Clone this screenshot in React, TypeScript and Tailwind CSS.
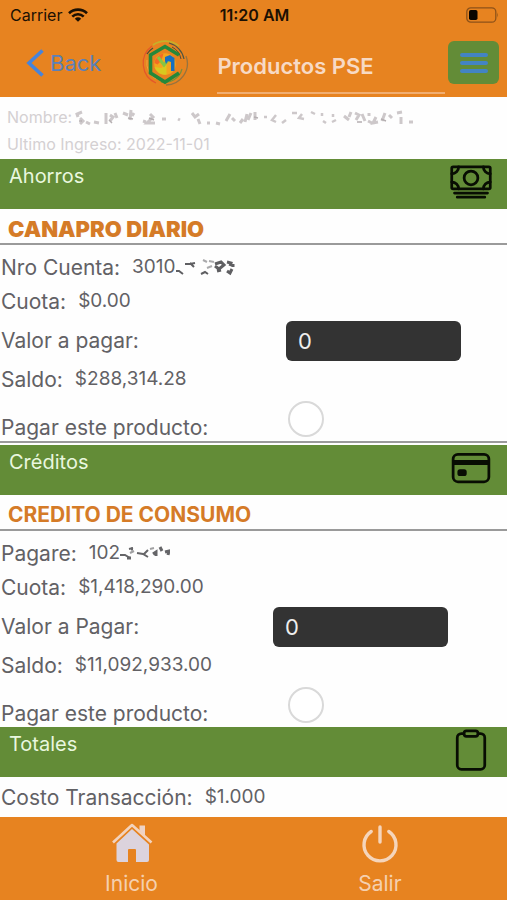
import { useId } from "react";
import type { ReactNode } from "react";
import { IoCardOutline, IoCashOutline, IoClipboardOutline } from "react-icons/io5";

function Wifi() {
  return (
    <svg viewBox="0 0 20 14" className="h-[14px] w-5" fill="none" stroke="#1b1003" strokeWidth="2.6" aria-hidden="true">
      <path d="M1 5.2a13 13 0 0 1 18 0" />
      <path d="M4.3 8.6a8.2 8.2 0 0 1 11.4 0" />
      <path d="M10 13.8 6.8 10.7a4.7 4.7 0 0 1 6.4 0Z" fill="#1b1003" stroke="none" />
    </svg>
  );
}

function Battery() {
  return (
    <svg viewBox="0 0 33 16" className="h-4 w-[33px]" aria-hidden="true">
      <rect x="0.8" y="0.8" width="29" height="14.4" rx="4" fill="none" stroke="#8d5219" strokeWidth="1.3" />
      <rect x="3" y="3" width="8.5" height="10" rx="1.8" fill="#0b0500" />
      <path d="M31.2 5.5q1.5 2.5 0 5Z" fill="#8d5219" />
    </svg>
  );
}

function Logo() {
  return (
    <svg viewBox="0 0 48 48" className="size-12" fill="none" aria-hidden="true">
      <path d="M11 7A21.5 21.5 0 0 0 15 44" stroke="#e4572a" strokeWidth="1.2" />
      <path d="M6 21A18.5 18.5 0 0 0 15 40" stroke="#f0a43c" strokeWidth="1" />
      <path d="M12 6A21.5 21.5 0 0 1 38 7" stroke="#c6b02a" strokeWidth="1.6" />
      <path d="M6 15A20 20 0 0 1 12 9" stroke="#4d4b35" strokeWidth="1.3" />
      <path d="M28 4A20.5 20.5 0 0 1 43 20" stroke="#4d5543" strokeWidth="1.2" />
      <path d="M31 8A17 17 0 0 1 40 20" stroke="#5a4a35" strokeWidth="1" />
      <path d="M45 17A21.5 21.5 0 0 1 25 46" stroke="#96733f" strokeWidth="1.3" />
      <path d="M41 30A18 18 0 0 1 20 43" stroke="#779038" strokeWidth="1.2" />
      <path d="M38 16 24 7.5 9.5 16v18L24 43l14-9" stroke="#25883a" strokeWidth="3.6" />
      <circle cx="24" cy="25" r="10.8" fill="#f3a51d" />
      <path d="M13.5 24a10.800 10.800 0 0 1 9-9.500l-2 7-4 4Z" fill="#f36b25" />
      <path d="M13.500 28a10.800 10.800 0 0 0 12 7.500V24l-5 5Z" fill="#d8c91f" />
      <path d="m17 18 6 8 5-6" stroke="#8ac440" strokeWidth="3" />
      <path d="M24 22v-4l5-2 4.500 3v13H30v-9l-3-1-2 3Z" fill="#176fc0" />
    </svg>
  );
}

function HomeIcon() {
  return (
    <svg viewBox="0 0 44 44" className="size-11" fill="none" aria-hidden="true">
      <path d="M29.500 4.500h5.500v10.500l-5.500-5.500Z" fill="#eed3c6" />
      <path d="M3 21.500 22 4l19.500 17.500" stroke="#f3d3bd" strokeWidth="2.600" strokeLinejoin="round" />
      <path d="M22 8 6.500 22.500V39q0 2 2 2H18V29q0-1 1-1h6q1 0 1 1v12h11q2 0 2-2V23.500Z" fill="#dcd3dd" />
    </svg>
  );
}

function PowerIcon() {
  return (
    <svg viewBox="0 0 44 44" className="size-11" fill="none" stroke="#f5d5bb" strokeWidth="3.400" strokeLinecap="round" aria-hidden="true">
      <path d="M13.200 10.500a16 16 0 1 0 17.600 0" />
      <path d="M22 6v15" />
    </svg>
  );
}

function SmudgedName() {
  return (
    <svg viewBox="0 0 340 18" className="h-[18px] w-[340px]" fill="none" stroke="#cdc8ca" strokeWidth="3" aria-hidden="true">
      <path d="M8 3 3 5l1 3M6 9l3 3-3 3M12 13l4 2M20 13l5 1M32 4v11M36 6l3 2-3 4M41 4l2 5M49 4l5 2M57 1l-1 10M60 4l-2 3M69 12l3 1M76 5l3 3-6 6h8" />
      <path d="M88 10h4M104 10l2 1M118 4l3 4 4-3M124 10l2 5M133 14h3M142 14l4 1M152 12l4-7M158 9l3 3M166 14l3-4M173 5l-2 8M177 4l-3 7M181 3v8" />
      <path d="M190 8h3M202 6l-4 5 4 2M208 14l4-3M218 4h5M228 5l-3 4 5 1M237 3l4 2M248 4v3M249 12l3 2M259 5v3M258 13l4-2" strokeWidth="2.500" />
      <path d="M270 7l5 4M277 3l-2 5M281 4l4 2-3 5M288 5l3 7M295 4v3M294 12l4 2M302 8l-3 6 5-1M311 4l-3 8M315 6l3 3M323 4l5-1M327 8v7M335 13h4" />
      <path d="M5 12h3M35 11l3 3M54 9l5 1M75 9l5 2M180 8l4 1M283 13h5M307 10l5 2" stroke="#b5afb1" strokeWidth="1.500" />
    </svg>
  );
}

function SmudgedAccount() {
  return (
    <svg viewBox="0 0 60 18" className="h-[18px] w-[60px]" fill="none" stroke="#5f5f62" strokeWidth="2" aria-hidden="true">
      <path d="M0 13h3l4 3M9 6h5l5-1M14 5l4 4M25 16l4-2 3 2" />
      <path d="M27 2l4 2M33 3l5 1M31 10l5-2" stroke="#aaaaac" />
      <path d="m39 6 6-2 3 3-5 4-4-3M41 13l4-1M51 4l4 1-1 3M57 6v3M51 13l3 2 2-4" strokeWidth="3" />
    </svg>
  );
}

function SmudgedNote() {
  return (
    <svg viewBox="0 0 50 18" className="h-[18px] w-[50px]" fill="none" stroke="#656568" strokeWidth="2" aria-hidden="true">
      <path d="M0 11h5l5 3M9 5l4-1M17 9l6 1 5 3M24 10l4-4" />
      <path d="M7 14h4M11 5h2M33 10l3-2v4M40 3l2 4M45 8l4-1-1 4" strokeWidth="3" />
      <path d="M10 9l4-2M30 5l4-1" stroke="#a0a0a2" />
    </svg>
  );
}

function SectionBar({ title, icon }: { title: string; icon: ReactNode }) {
  return (
    <div className="flex h-[50px] items-start justify-between bg-[#638c37] pt-px pr-3.5 pl-[9px]">
      <h2 className="text-xl leading-8 text-[#e9f7df]">{title}</h2>
      <span className="text-[44px] text-[#080d03]">{icon}</span>
    </div>
  );
}

function Row({ label, children }: { label: string; children: ReactNode }) {
  return (
    <div className="flex h-[34px] items-center gap-3 px-px">
      <dt className="text-[21px]">{label}</dt>
      <dd className="flex items-center pb-0.5 text-[19px]">{children}</dd>
    </div>
  );
}

type ProductProps = {
  name: string;
  heading: string;
  numberLabel: string;
  number: ReactNode;
  fee: string;
  amountLabel: string;
  amountColumn: string;
  balance: string;
};

function Product({ name, heading, numberLabel, number, fee, amountLabel, amountColumn, balance }: ProductProps) {
  const id = useId();
  return (
    <section className="text-[#626165]">
      <h3 className={`border-b-2 border-[#9a9a9a] pt-1.5 pl-2 leading-7 text-[#d57b27] ${heading}`}>{name}</h3>
      <dl className="pt-1.5">
        <Row label={numberLabel}>{number}</Row>
        <Row label="Cuota:">{fee}</Row>
      </dl>
      <div className="flex h-11 items-center pl-px">
        <label htmlFor={`${id}-amount`} className={`text-[21px] ${amountColumn}`}>{amountLabel}</label>
        <input
          id={`${id}-amount`}
          inputMode="decimal"
          defaultValue="0"
          className="h-10 w-[175px] rounded-md bg-[#333333] px-3 text-[22px] text-[#eeeeee]"
        />
      </div>
      <dl>
        <Row label="Saldo:">{balance}</Row>
      </dl>
      <div className="flex h-11 items-center pl-px">
        <label htmlFor={`${id}-pay`} className="w-[287px] self-end text-[21px] leading-[26px]">Pagar este producto:</label>
        <input
          id={`${id}-pay`}
          type="checkbox"
          className="size-9 appearance-none rounded-full border-2 border-[#d9d9d9] bg-white checked:bg-[#638c37]"
        />
      </div>
    </section>
  );
}

export default function App() {
  return (
    <div className="flex min-h-screen flex-col bg-[#fefefe] font-['Inter','Liberation_Sans',sans-serif]">
      <header className="bg-[#e78320]">
        <div className="grid h-[29px] grid-cols-3 items-center px-2 pl-2.5 text-[#1b1003]">
          <div className="flex items-center gap-1.5 text-base">
            Carrier
            <Wifi />
          </div>
          <time className="text-center text-base font-semibold">11:20 AM</time>
          <div className="flex justify-end">
            <Battery />
          </div>
        </div>
        <div className="flex h-[68px] items-start pr-2 pl-[26px]">
          <button type="button" className="mt-4 flex h-9 items-center gap-1.5 text-[22px] text-[#5b80b8]">
            <svg viewBox="0 0 18 28" className="h-7 w-[18px]" fill="none" stroke="#4684dc" strokeWidth="3.600" aria-hidden="true">
              <path d="M16.500 1.500 3 14l13.500 12.500" />
            </svg>
            Back
          </button>
          <span className="mt-2.5 ml-10">
            <Logo />
          </span>
          <h1 className="mt-3.5 ml-7 h-[51px] flex-1 border-b-2 border-[#f0ae72] text-[22px] leading-[46px] font-semibold whitespace-nowrap text-[#f7dac5]">
            Productos PSE
          </h1>
          <button type="button" aria-label="Menu" className="mt-3 ml-[3px] flex h-[43px] w-[51px] items-center justify-center rounded-md bg-[#638c37]">
            <svg viewBox="0 0 28 20" className="h-5 w-7" stroke="#4384c3" strokeWidth="4" strokeLinecap="round" aria-hidden="true">
              <path d="M2 2h24M2 10h24M2 18h24" />
            </svg>
          </button>
        </div>
      </header>

      <main>
        <div className="h-[62px] pt-[7px] pl-[7px] text-base leading-[27px] text-[#d4d0d2]">
          <p className="flex items-center gap-0.5">
            Nombre:
            <SmudgedName />
          </p>
          <p>Ultimo Ingreso: 2022-11-01</p>
        </div>

        <SectionBar title="Ahorros" icon={<IoCashOutline />} />
        <Product
          name="CANAPRO DIARIO"
          heading="text-[22px] font-black"
          numberLabel="Nro Cuenta:"
          number={<>3010<SmudgedAccount /></>}
          fee="$0.00"
          amountLabel="Valor a pagar:"
          amountColumn="w-[285px]"
          balance="$288,314.28"
        />
        <div className="border-t-2 border-[#9a9a9a] pt-0.5" />

        <SectionBar title="Créditos" icon={<IoCardOutline />} />
        <Product
          name="CREDITO DE CONSUMO"
          heading="text-[21px] font-bold"
          numberLabel="Pagare:"
          number={<>102<SmudgedNote /></>}
          fee="$1,418,290.00"
          amountLabel="Valor a Pagar:"
          amountColumn="w-[272px]"
          balance="$11,092,933.00"
        />

        <SectionBar title="Totales" icon={<IoClipboardOutline />} />
        <dl className="pt-1 pb-0.5 text-[#626165]">
          <Row label="Costo Transacción:">$1.000</Row>
        </dl>
      </main>

      <footer className="mt-auto flex h-[83px] items-start justify-center gap-[200px] bg-[#e78320] pt-1">
        <button type="button" className="flex flex-col items-center text-[21px] leading-[38px] text-[#f5d0af]">
          <HomeIcon />
          Inicio
        </button>
        <button type="button" className="flex flex-col items-center text-[21px] leading-[38px] text-[#f5d0af]">
          <PowerIcon />
          Salir
        </button>
      </footer>
    </div>
  );
}
